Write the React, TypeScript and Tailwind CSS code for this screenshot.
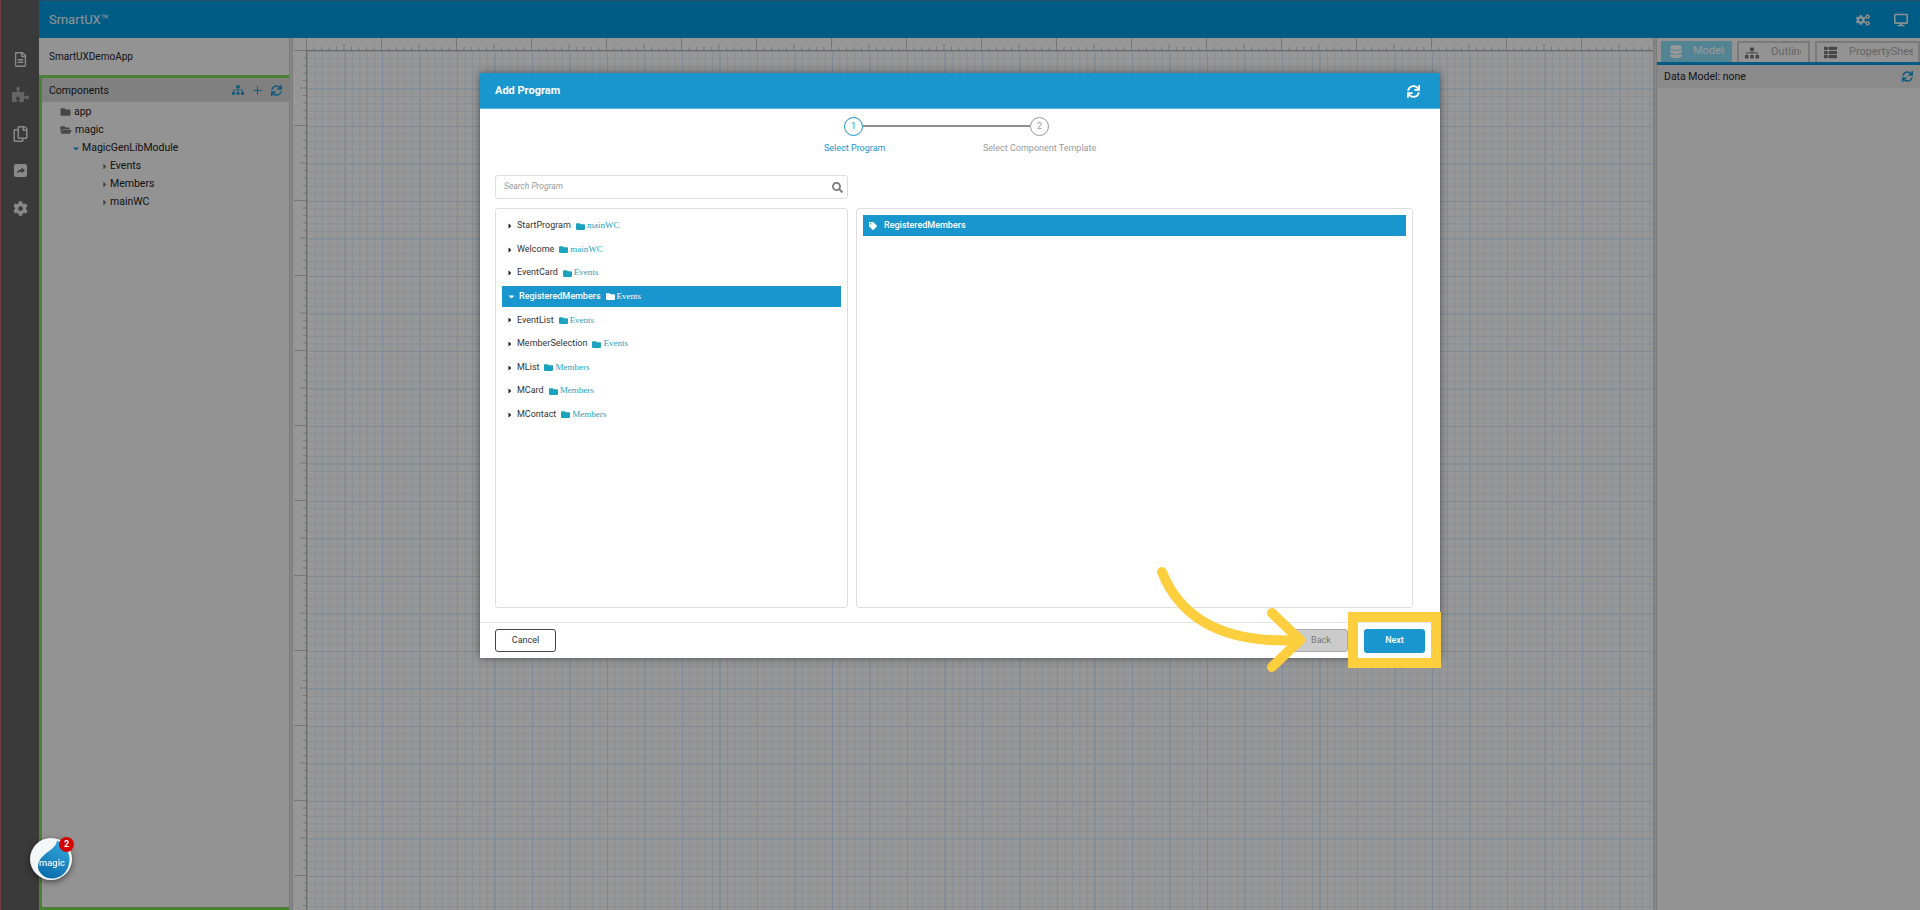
import { Plus } from "lucide-react";
import { FaCaretDown, FaCaretRight, FaCog, FaCogs, FaDatabase, FaDesktop, FaFolder, FaFolderOpen, FaPuzzlePiece, FaRegCopy, FaRegFileAlt, FaSearch, FaSitemap, FaSync, FaTag, FaThList } from "react-icons/fa";

const PROGRAMS = [
  { name: "StartProgram", folder: "mainWC" },
  { name: "Welcome", folder: "mainWC" },
  { name: "EventCard", folder: "Events" },
  { name: "RegisteredMembers", folder: "Events", selected: true },
  { name: "EventList", folder: "Events" },
  { name: "MemberSelection", folder: "Events" },
  { name: "MList", folder: "Members" },
  { name: "MCard", folder: "Members" },
  { name: "MContact", folder: "Members" },
];

const TICKS = Array.from({ length: 190 }, (_, i) => i);

function tickSize(i: number) {
  if (i % 10 === 0) return 12;
  if (i % 5 === 0) return 6;
  return 3;
}

function ShareIcon() {
  return (
    <svg viewBox="0 0 16 16" className="h-[15px] w-[15px]">
      <rect x="1" y="1" width="14" height="14" rx="2.500" fill="#e4e4e4" />
      <path d="M4 11.500C4.500 8.500 6.500 7 9 7V4.800L12.800 8L9 11V9C7 9 5.500 9.800 4 11.500Z" fill="#616161" />
    </svg>
  );
}

function TreeRow({ children, indent }: { children: React.ReactNode; indent: string }) {
  return <div className={`flex h-[18px] items-center gap-[2px] text-[10.5px] text-[#222] ${indent}`}>{children}</div>;
}

function ProgramRow({ name, folder, selected }: { name: string; folder: string; selected?: boolean }) {
  return (
    <div className="flex h-[23.6px] items-center">
      <div className={`flex h-[21px] w-full items-center pl-[5px] text-[9px] ${selected ? "bg-[#1a96cf] text-white" : "pt-[0.5px] text-[#333]"}`}>
        {selected ? <FaCaretDown className="mr-[3px] h-[9px] w-[9px]" /> : <FaCaretRight className="mr-[4px] h-[8px] w-[6px] text-[#222]" />}
        <span className={selected ? "font-medium" : ""}>{name}</span>
        <FaFolder className={`ml-[5px] h-[9px] w-[9px] ${selected ? "text-white" : "text-[#1aa3bf]"}`} />
        <span className={`ml-[2px] font-['Liberation_Serif',serif] ${selected ? "text-white" : "text-[#1aa3bf]"}`}>{folder}</span>
      </div>
    </div>
  );
}

export default function App() {
  return (
    <div className="relative h-[910px] w-[1920px] overflow-hidden bg-[#f5f5f5] font-['Roboto','Liberation_Sans',sans-serif]">
      <div className="flex h-[910px]">
        <aside className="flex w-[39px] shrink-0 flex-col items-center border-l border-l-[#c8616d] bg-[#616161] pt-[34px] text-[#e4e4e4]">
          <div className="mt-[15px] flex h-[20px] items-center">
            <FaRegFileAlt className="h-[15px] w-[13px]" />
          </div>
          <div className="mt-[15px] flex h-[20px] items-center text-[#a8a8a8]">
            <FaPuzzlePiece className="h-[17px] w-[17px]" />
          </div>
          <div className="mt-[20px] flex h-[20px] items-center">
            <FaRegCopy className="h-[16px] w-[15px]" />
          </div>
          <div className="mt-[16px] flex h-[20px] items-center">
            <ShareIcon />
          </div>
          <div className="mt-[18px] flex h-[20px] items-center">
            <FaCog className="h-[15px] w-[15px]" />
          </div>
        </aside>

        <div className="flex min-w-0 flex-1 flex-col">
          <header className="flex h-[38px] shrink-0 items-center justify-between border-t border-t-[#3b86a8] bg-[#0098de] pl-[10px] pr-[12px]">
            <span className="text-[13px] text-[#f0f8fc]">SmartUX™</span>
            <div className="flex items-center gap-[24px] text-[#e4f2f9]">
              <FaCogs className="h-[14px] w-[14px]" />
              <FaDesktop className="h-[14px] w-[14px]" />
            </div>
          </header>

          <div className="flex min-h-0 flex-1">
            <div className="flex w-[250px] shrink-0 flex-col">
              <div className="flex h-[37px] shrink-0 items-center bg-[#f5f5f5] pl-[10px] text-[10px] text-[#222]">SmartUXDemoApp</div>
              <div className="flex min-h-0 flex-1 flex-col border-y-[3px] border-l-[3px] border-[#7bd557] bg-[#f5f5f5]">
                <div className="flex h-[24px] shrink-0 items-center justify-between bg-[#d5d5d5] px-[7px] text-[#1a96cf]">
                  <span className="pt-px text-[10.5px] text-[#222]">Components</span>
                  <div className="flex items-center gap-[7px]">
                    <FaSitemap className="h-[12px] w-[12px]" />
                    <Plus className="h-[13px] w-[13px]" strokeWidth={1.8} />
                    <FaSync className="h-[11px] w-[11px]" />
                  </div>
                </div>
                <div className="pt-px">
                  <TreeRow indent="pl-[18px]">
                    <FaFolder className="h-[10px] w-[11px] text-[#777]" />
                    <span className="ml-[1px]">app</span>
                  </TreeRow>
                  <TreeRow indent="pl-[18px]">
                    <FaFolderOpen className="h-[10px] w-[12px] text-[#777]" />
                    <span className="ml-[1px]">magic</span>
                  </TreeRow>
                  <TreeRow indent="pl-[30px]">
                    <FaCaretDown className="h-[9px] w-[8px] text-[#1a96cf]" />
                    <span>MagicGenLibModule</span>
                  </TreeRow>
                  {["Events", "Members", "mainWC"].map((n) => (
                    <TreeRow key={n} indent="pl-[60px]">
                      <FaCaretRight className="h-[9px] w-[6px] text-[#777]" />
                      <span>{n}</span>
                    </TreeRow>
                  ))}
                </div>
              </div>
            </div>

            <div className="w-[4px] shrink-0 border-x border-[#cfcfcf] bg-[#dedede]" />

            <main className="flex min-w-0 flex-1 flex-col bg-[#fcfcfc]">
              <div className="flex h-[12px] shrink-0">
                <div className="w-[12px] shrink-0" />
                <svg className="h-[12px] flex-1 overflow-hidden">
                  {TICKS.map((i) => (
                    <line key={i} x1={i * 7.5 + 1.5} x2={i * 7.5 + 1.5} y1={12 - tickSize(i)} y2={12} stroke="#c4c4c4" />
                  ))}
                </svg>
              </div>
              <div className="flex min-h-0 flex-1">
                <svg className="h-full w-[13px] shrink-0 overflow-hidden">
                  {TICKS.map((i) => (
                    <line key={i} x1={13 - tickSize(i)} x2={13} y1={i * 7.5 + 0.5} y2={i * 7.5 + 0.5} stroke="#c4c4c4" />
                  ))}
                </svg>
                <div className="flex-1 border-l border-t border-[#b0b0b0] bg-[linear-gradient(#d2e6fb_1px,transparent_1px),linear-gradient(90deg,#d2e6fb_1px,transparent_1px),linear-gradient(#e0edfb_1px,transparent_1px),linear-gradient(90deg,#e0edfb_1px,transparent_1px)] bg-[size:37.5px_37.5px,37.5px_37.5px,7.5px_7.5px,7.5px_7.5px]" />
              </div>
            </main>

            <div className="w-[4px] shrink-0 border-x border-[#cfcfcf] bg-[#dedede]" />

            <section className="flex w-[263px] shrink-0 flex-col bg-[#f5f5f5]">
              <div className="flex h-[24px] shrink-0 items-end gap-[5px] pl-[4px] text-[11px]">
                <div className="flex h-[21px] w-[71px] items-center bg-[#8adcf5] pl-[9px] pr-[7px] text-white">
                  <FaDatabase className="h-[13px] w-[12px] shrink-0" />
                  <span className="ml-[11px] min-w-0 flex-1 overflow-hidden whitespace-nowrap">Models</span>
                </div>
                <div className="flex h-[21px] w-[73px] items-center border-2 border-b-0 border-[#cbcbcb] pl-[6px] pr-[7px] text-[#a8a8a8]">
                  <FaSitemap className="h-[14px] w-[14px] shrink-0 text-[#777]" />
                  <span className="ml-[12px] min-w-0 flex-1 overflow-hidden whitespace-nowrap">Outline</span>
                </div>
                <div className="flex h-[21px] w-[105px] items-center border-2 border-b-0 border-[#cbcbcb] pl-[6px] pr-[5px] text-[#a8a8a8]">
                  <FaThList className="h-[13px] w-[15px] shrink-0 text-[#777]" />
                  <span className="ml-[11px] min-w-0 flex-1 overflow-hidden whitespace-nowrap">PropertySheet</span>
                </div>
              </div>
              <div className="h-[3px] shrink-0 bg-[#0098de]" />
              <div className="flex h-[23px] shrink-0 items-center justify-between bg-[#e6e6e6] px-[7px] text-[10.5px] text-[#222]">
                <span>Data Model: none</span>
                <FaSync className="h-[11px] w-[11px] text-[#1a96cf]" />
              </div>
            </section>
          </div>
        </div>
      </div>

      {/* backdrop + dialog */}
      <div className="absolute inset-0 bg-black/40" />
      <div className="absolute left-[480px] top-[73px] flex h-[585px] w-[960px] flex-col bg-white shadow-[0_0_8px_rgba(0,0,0,0.45)]">
        <div className="flex h-[36px] shrink-0 items-center justify-between border-b border-b-[#5cb4de] bg-[#1a96cf] pl-[15px] pr-[20px] pt-px text-white">
          <span className="text-[11px] font-bold">Add Program</span>
          <FaSync className="h-[13px] w-[13px]" />
        </div>

        <div className="relative h-[66px] shrink-0">
          <div className="absolute left-[364px] top-[8px] flex h-[19px] w-[19px] items-center justify-center rounded-full border border-[#1a96cf] text-[9px] text-[#1a96cf]">1</div>
          <div className="absolute left-[383px] top-[16px] h-[2px] w-[167px] bg-[#8f8f8f]" />
          <div className="absolute left-[550px] top-[8px] flex h-[19px] w-[19px] items-center justify-center rounded-full border border-[#999] text-[9px] text-[#999]">2</div>
          <span className="absolute left-[344px] top-[33px] text-[9px] text-[#1a96cf]">Select Program</span>
          <span className="absolute left-[503px] top-[33px] text-[9px] text-[#999]">Select Component Template</span>
        </div>

        <div className="flex min-h-0 flex-1 gap-[8px] pl-[15px] pr-[27px]">
          <div className="flex w-[353px] shrink-0 flex-col gap-[9px] pb-[14px]">
            <div className="flex h-[24px] shrink-0 items-center rounded-[3px] border border-[#ddd] pb-[2px] pl-[8px] pr-[4px]">
              <input
                placeholder="Search Program"
                className="min-w-0 flex-1 bg-transparent text-[8.5px] italic outline-none placeholder:text-[#999]"
              />
              <FaSearch className="mt-[2px] h-[11px] w-[11px] text-[#777]" />
            </div>
            <div className="min-h-0 flex-1 rounded-[3px] border border-[#ddd] px-[6px] pt-[5px]">
              {PROGRAMS.map((p) => (
                <ProgramRow key={p.name} name={p.name} folder={p.folder} selected={p.selected} />
              ))}
            </div>
          </div>
          <div className="flex min-w-0 flex-1 flex-col pb-[14px] pt-[33px]">
            <div className="min-h-0 flex-1 rounded-[3px] border border-[#ddd] px-[6px] pt-[6px]">
              <div className="flex h-[21px] items-center bg-[#1a96cf] pl-[6px] text-[9px] font-medium text-white">
                <FaTag className="mr-[7px] h-[8px] w-[8px]" />
                RegisteredMembers
              </div>
            </div>
          </div>
        </div>

        <div className="flex h-[36px] shrink-0 items-start justify-between border-t border-t-[#e5e5e5] px-[15px] pt-[6px]">
          <button className="h-[23px] w-[61px] rounded-[3px] border border-[#444] text-[9px] text-[#333]">Cancel</button>
          <div className="flex gap-[16px]">
            <button className="h-[23px] w-[58px] rounded-[3px] border border-[#aaa] bg-[#cbcbcb] pl-[4px] text-[9px] text-[#777]">Back</button>
            <button className="h-[24px] w-[61px] rounded-[3px] bg-[#1a96cf] text-[9px] font-medium text-white">Next</button>
          </div>
        </div>
      </div>

      {/* tutorial annotation */}
      <div className="absolute left-[1348px] top-[612px] h-[56px] w-[93px] border-[10px] border-[#fdce3e]" />
      <svg className="absolute left-[1150px] top-[560px] h-[120px] w-[170px]" viewBox="1150 560 170 120" fill="none" stroke="#fdce3e" strokeWidth="10" strokeLinecap="round" strokeLinejoin="round">
        <path d="M1162 572C1182 622 1228 644 1300 640" />
        <path d="M1272 613L1300 640L1272 667" />
      </svg>

      {/* chat launcher */}
      <div className="absolute left-[30px] top-[838px] h-[42px] w-[43px]">
        <svg viewBox="0 0 42 42" className="h-[42px] w-[42px] drop-shadow-[0_2px_3px_rgba(0,0,0,0.5)]">
          <defs>
            <linearGradient id="magicBlue" x1="0.7" y1="0" x2="0.3" y2="1">
              <stop offset="0" stopColor="#35a6dc" />
              <stop offset="1" stopColor="#0a6cab" />
            </linearGradient>
          </defs>
          <circle cx="21" cy="21" r="21" fill="#f4f7f9" />
          <path d="M27 2.500C26 13 9 15 8 28C7.500 34 14 40.500 22 40.500C33 40.500 40 31 39.500 20C39 12 33 5 27 2.500Z" fill="url(#magicBlue)" />
          <text x="22" y="28" textAnchor="middle" fontSize="9.500" fontWeight="500" fill="#eaf5fb" fontFamily="Roboto, sans-serif">magic</text>
        </svg>
        <span className="absolute right-[-1px] top-[-1px] flex h-[15px] w-[15px] items-center justify-center rounded-full bg-[#d40000] text-[9px] font-bold text-white">2</span>
      </div>
    </div>
  );
}
